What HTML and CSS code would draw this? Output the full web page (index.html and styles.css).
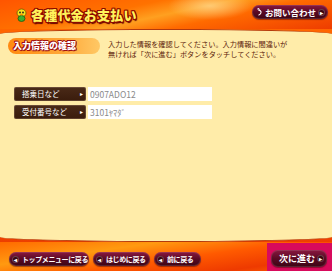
FILE: index.html
```html
<!DOCTYPE html>
<html lang="ja">
<head>
<meta charset="utf-8">
<link rel="stylesheet" href="styles.css">
</head>
<body>
<header class="header">
  <div class="brand">
    <svg class="mascot" width="11" height="14" viewBox="0 0 11 14">
      <ellipse cx="5.5" cy="5" rx="4.5" ry="4" fill="#f7e21a" stroke="#6a5a00" stroke-width="0.8"/>
      <ellipse cx="5.5" cy="10.5" rx="3.5" ry="3" fill="#3cae2c" stroke="#1c5a10" stroke-width="0.8"/>
      <circle cx="4" cy="4.5" r="0.9" fill="#222"/>
      <circle cx="7" cy="4.5" r="0.9" fill="#222"/>
      <ellipse cx="5.5" cy="6.6" rx="1.4" ry="0.8" fill="#ff8a00"/>
    </svg>
    <h1 class="title">各種代金お支払い</h1>
  </div>
  <div class="pill pill-contact">
    <svg class="phone" width="8" height="10" viewBox="0 0 8 10"><path d="M1 1 L2 0.5 L3 1.5 L2.5 2.5 Q5 3 5.5 5 Q5.5 8 2.5 9" fill="none" stroke="#fff" stroke-width="1.4" stroke-linecap="round"/></svg>
    <span>お問い合わせ</span>
    <span class="dot">▸</span>
  </div>
</header>
<main class="panel">
  <section class="intro">
    <div class="badge">入力情報の確認</div>
    <p class="desc">入力した情報を確認してください。入力情報に間違いが<br>無ければ「次に進む」ボタンをタッチしてください。</p>
  </section>
  <section class="rows">
    <div class="row">
      <div class="label"><span>搭乗日など</span><span class="tri">▸</span></div>
      <div class="value">0907ADO12</div>
    </div>
    <div class="row">
      <div class="label"><span>受付番号など</span><span class="tri">▸</span></div>
      <div class="value">3101ﾔﾏﾀﾞ</div>
    </div>
  </section>
</main>
<footer class="footer">
  <nav class="nav">
    <div class="pill pill-nav nav-top"><span class="dot">◂</span><span>トップメニューに戻る</span></div>
    <div class="pill pill-nav nav-start"><span class="dot">◂</span><span>はじめに戻る</span></div>
    <div class="pill pill-nav nav-back"><span class="dot">◂</span><span>前に戻る</span></div>
  </nav>
  <div class="next-wrap">
    <div class="pill pill-next"><span>次に進む</span><span class="dot">▸</span></div>
  </div>
</footer>
</body>
</html>
```
FILE: styles.css
```css
* { box-sizing: border-box; }
html, body { margin: 0; padding: 0; }
body {
  width: 332px;
  height: 271px;
  overflow: hidden;
  display: flex;
  flex-direction: column;
  font-family: "Noto Sans CJK JP", "Noto Sans", sans-serif;
  background: linear-gradient(180deg, #ff5a00 0%, #ff7a00 30%, #ff5000 70%, #e33600 100%);
}
.header {
  height: 29px;
  flex: none;
  display: flex;
  justify-content: space-between;
  align-items: flex-start;
  padding: 5px 4px 0 16px;
  background:
    radial-gradient(ellipse 60px 20px at 210px 6px, rgba(255,220,150,0.7), rgba(255,220,150,0) 70%),
    linear-gradient(168deg, #ff5500 0%, #ff7200 35%, #ffa020 50%, #ff6a00 65%, #ee3c00 100%);
}
.brand { display: flex; align-items: center; gap: 4px; padding-top: 2px; }
.mascot { display: block; }
.title {
  margin: 0;
  font-size: 13px;
  font-weight: 900;
  line-height: 16px;
  color: #fff35a;
  letter-spacing: 0.2px;
  text-shadow:
    1px 0 0 #8c0a00, -1px 0 0 #8c0a00, 0 1px 0 #8c0a00, 0 -1px 0 #8c0a00,
    1px 1px 0 #8c0a00, -1px -1px 0 #8c0a00, 1px -1px 0 #8c0a00, -1px 1px 0 #8c0a00,
    1px 2px 1px #5a0000;
}
.pill {
  display: flex;
  align-items: center;
  border-radius: 7px;
  color: #fff;
  font-weight: 700;
  background: linear-gradient(180deg, #8a1840 0%, #5a0a24 50%, #3c0514 100%);
  box-shadow: inset 0 0 0 1px rgba(255,255,255,0.12), 0 1px 1px rgba(80,0,0,0.5);
  white-space: nowrap;
}
.pill-contact {
  height: 14px;
  width: 76px;
  padding: 0 3px 0 5px;
  gap: 2px;
  font-size: 8.5px;
  line-height: 14px;
}
.pill-contact .dot { margin-left: auto; }
.dot {
  flex: none;
  width: 7px;
  height: 7px;
  border-radius: 50%;
  background: #3a0410;
  color: #fff;
  font-size: 6px;
  line-height: 7px;
  text-align: center;
  box-shadow: inset 0 0 0 1px rgba(255,255,255,0.25);
}
.panel {
  flex: 1;
  padding: 6px 8px 0;
  background: #ffeca9;
  border-top: 1.5px solid #b33a0c;
  border-bottom: 1.5px solid #b33a0c;
  border-radius: 50% / 5px;
}
.intro { display: flex; gap: 8px; align-items: flex-start; }
.badge {
  width: 92px;
  height: 16px;
  flex: none;
  margin-top: 2px;
  padding-left: 5px;
  border-radius: 8px;
  background: linear-gradient(90deg, #ff8a10 0%, #ffa838 60%, #ffc865 100%);
  color: #fff;
  font-size: 9px;
  font-weight: 900;
  line-height: 16px;
  text-shadow:
    1px 0 0 #a01010, -1px 0 0 #a01010, 0 1px 0 #a01010, 0 -1px 0 #a01010,
    1px 1px 0 #a01010, -1px -1px 0 #a01010;
}
.desc {
  margin: 3px 0 0;
  font-size: 7.2px;
  line-height: 10px;
  color: #5e1c0a;
  white-space: nowrap;
}
.rows {
  display: flex;
  flex-direction: column;
  gap: 4px;
  margin-top: 28px;
  padding-left: 6px;
}
.row { display: flex; gap: 2px; height: 14px; }
.label {
  width: 72px;
  display: flex;
  align-items: center;
  justify-content: space-between;
  padding: 0 3px 0 8px;
  border-radius: 2px;
  background: linear-gradient(180deg, #4a2a18 0%, #3a1c0c 100%);
  box-shadow: inset 0 0 0 1px rgba(255,230,200,0.18);
  color: #fff;
  font-size: 7.5px;
  line-height: 14px;
}
.tri { font-size: 6px; }
.value {
  width: 124px;
  background: #fff;
  color: #8a8a8a;
  font-size: 8.5px;
  line-height: 14px;
  padding-left: 2px;
}
.footer {
  height: 29px;
  flex: none;
  display: flex;
  justify-content: space-between;
  align-items: flex-end;
  background: linear-gradient(172deg, #ff6a00 0%, #ff9a10 30%, #ff5a00 55%, #ee3a00 80%, #ff6a00 100%);
}
.nav { display: flex; gap: 4px; padding: 0 0 5px 9px; }
.pill-nav {
  height: 14px;
  padding: 0 3px;
  gap: 3px;
  font-size: 7px;
  line-height: 14px;
  letter-spacing: -0.4px;
}
.nav-top { width: 80px; }
.nav-start { width: 57px; }
.nav-back { width: 47px; }
.next-wrap {
  width: 65px;
  height: 28px;
  background: #d80a5c;
  padding: 7px 5px 4px 4px;
}
.pill-next {
  height: 17px;
  justify-content: space-between;
  padding: 0 3px 0 8px;
  font-size: 9px;
  line-height: 17px;
}
```
